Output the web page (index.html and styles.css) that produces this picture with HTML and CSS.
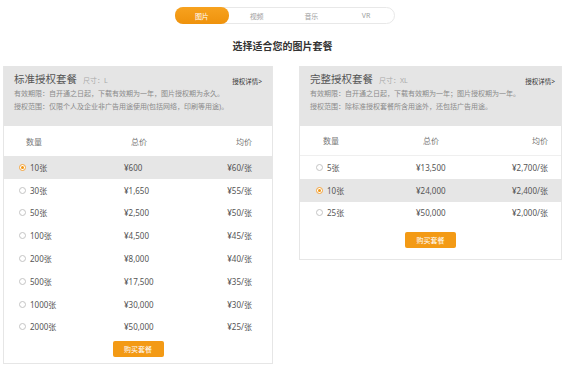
FILE: index.html
```html
<!DOCTYPE html>
<html lang="zh-CN">
<head>
  <meta charset="UTF-8" />
  <meta name="viewport" content="width=device-width, initial-scale=1" />
  <title>图片套餐</title>
  <link rel="stylesheet" href="styles.css">
</head>
<body>
  <div class="page">

    <nav class="tabs" aria-label="素材类型">
      <a class="tab active" href="#">图片</a>
      <a class="tab" href="#">视频</a>
      <a class="tab" href="#">音乐</a>
      <a class="tab" href="#">VR</a>
    </nav>

    <h2 class="title">选择适合您的图片套餐</h2>

    <div class="plans">

      <!-- Standard plan -->
      <section class="plan plan-std">
        <div class="plan-head">
          <div class="name-row">
            <h3>标准授权套餐<span class="size">尺寸：L</span></h3>
            <a class="detail" href="#">授权详情&gt;</a>
          </div>
          <p>有效期限：自开通之日起，下载有效期为一年，图片授权期为永久。</p>
          <p>授权范围：仅限个人及企业非广告用途使用(包括网络，印刷等用途)。</p>
        </div>
        <div class="price-table">
          <div class="row head"><span>数量</span><span>总价</span><span>均价</span></div>
          <div class="row selected"><span class="qty"><i class="radio"></i>10张</span><span>¥600</span><span>¥60/张</span></div>
          <div class="row"><span class="qty"><i class="radio"></i>30张</span><span>¥1,650</span><span>¥55/张</span></div>
          <div class="row"><span class="qty"><i class="radio"></i>50张</span><span>¥2,500</span><span>¥50/张</span></div>
          <div class="row"><span class="qty"><i class="radio"></i>100张</span><span>¥4,500</span><span>¥45/张</span></div>
          <div class="row"><span class="qty"><i class="radio"></i>200张</span><span>¥8,000</span><span>¥40/张</span></div>
          <div class="row"><span class="qty"><i class="radio"></i>500张</span><span>¥17,500</span><span>¥35/张</span></div>
          <div class="row"><span class="qty"><i class="radio"></i>1000张</span><span>¥30,000</span><span>¥30/张</span></div>
          <div class="row"><span class="qty"><i class="radio"></i>2000张</span><span>¥50,000</span><span>¥25/张</span></div>
        </div>
        <button class="buy" type="button">购买套餐</button>
      </section>

      <!-- Full plan -->
      <section class="plan plan-full">
        <div class="plan-head">
          <div class="name-row">
            <h3>完整授权套餐<span class="size">尺寸：XL</span></h3>
            <a class="detail" href="#">授权详情&gt;</a>
          </div>
          <p>有效期限：自开通之日起，下载有效期为一年；图片授权期为一年。</p>
          <p>授权范围：除标准授权套餐所含用途外，还包括广告用途。</p>
        </div>
        <div class="price-table">
          <div class="row head"><span>数量</span><span>总价</span><span>均价</span></div>
          <div class="row"><span class="qty"><i class="radio"></i>5张</span><span>¥13,500</span><span>¥2,700/张</span></div>
          <div class="row selected"><span class="qty"><i class="radio"></i>10张</span><span>¥24,000</span><span>¥2,400/张</span></div>
          <div class="row"><span class="qty"><i class="radio"></i>25张</span><span>¥50,000</span><span>¥2,000/张</span></div>
        </div>
        <button class="buy" type="button">购买套餐</button>
      </section>

    </div>
  </div>
</body>
</html>
```

FILE: styles.css
```css
/* Base */
body {
  margin: 0;
  background: #fff;
  font-family: "Noto Sans", "Noto Sans CJK SC", sans-serif;
  color: #555;
}

.page {
  padding-top: 7px;
}

/* Tabs */
.tabs {
  display: flex;
  width: 220px;
  height: 17px;
  margin: 0 auto;
  box-sizing: border-box;
  border: 1px solid #e8e8e8;
  border-radius: 9px;
  position: relative;
  left: 2px;
}

.tab {
  flex: 1;
  display: flex;
  align-items: center;
  justify-content: center;
  font-size: 7px;
  color: #a0a0a0;
  text-decoration: none;
  border-radius: 8px;
}

.tab.active {
  background: linear-gradient(180deg, #f7a21f 0%, #ef920c 100%);
  color: #fff;
  margin: -1px 0 -1px -1px;
}

/* Title */
.title {
  margin: 15px 0 13px;
  text-align: center;
  font-size: 10px;
  line-height: 14px;
  font-weight: 700;
  color: #333;
}

/* Plans */
.plans {
  display: flex;
  align-items: flex-start;
  gap: 26px;
  padding-left: 3px;
}

.plan {
  box-sizing: border-box;
  border: 1px solid #e6e6e6;
  border-top: none;
  background: #fff;
}

.plan-std {
  width: 270px;
  padding-bottom: 6px;
}

.plan-full {
  width: 263px;
  padding-bottom: 11px;
}

.plan-head {
  background: #e5e5e5;
  padding: 7px 6px 13px 10px;
}

.name-row {
  display: flex;
  justify-content: space-between;
  align-items: center;
  height: 14px;
}

.name-row h3 {
  margin: 0;
  font-size: 10.5px;
  line-height: 14px;
  font-weight: 400;
  color: #555;
}

.size {
  margin-left: 6px;
  font-size: 7px;
  color: #aaa;
}

.detail {
  font-size: 6.5px;
  line-height: 10px;
  color: #333;
  text-decoration: none;
  margin-top: 3px;
}

.plan-std .detail {
  margin-right: 4px;
}

.plan-head p {
  margin: 0;
  font-size: 7px;
  line-height: 13px;
  color: #8a8a8a;
  white-space: nowrap;
}

/* Price table */
.row {
  display: grid;
  align-items: center;
  height: 22.8px;
  font-size: 8px;
  color: #555;
}

.row span:last-child {
  text-align: right;
}

.plan-std .row {
  grid-template-columns: 105px 1fr auto;
  padding: 0 20px 0 15px;
}

.plan-full .row {
  grid-template-columns: 100px 1fr auto;
  padding: 0 13px 0 16px;
}

.row.head {
  height: 30px;
  color: #777;
}

.plan-full .row.head {
  border-bottom: 1px solid #efefef;
  height: 29px;
}

.row.head span:not(:last-child) {
  padding-left: 7px;
}

.row.selected {
  background: #e6e6e6;
}

.qty {
  display: flex;
  align-items: center;
  gap: 4px;
}

.radio {
  width: 5px;
  height: 5px;
  border: 1px solid #c4c4c4;
  border-radius: 50%;
  background: #fff;
  display: inline-flex;
  align-items: center;
  justify-content: center;
}

.row.selected .radio {
  border-color: #f3a23a;
}

.row.selected .radio::after {
  content: "";
  width: 3px;
  height: 3px;
  border-radius: 50%;
  background: #f29611;
}

/* Buy button */
.buy {
  display: block;
  width: 51px;
  height: 16px;
  margin: 0 auto;
  padding: 0;
  border: none;
  border-radius: 2px;
  background: #f39a15;
  color: #fff;
  font-family: inherit;
  font-size: 7px;
  cursor: pointer;
}

.plan-std .buy {
  margin-top: 3px;
}

.plan-full .buy {
  margin-top: 8px;
}
```
